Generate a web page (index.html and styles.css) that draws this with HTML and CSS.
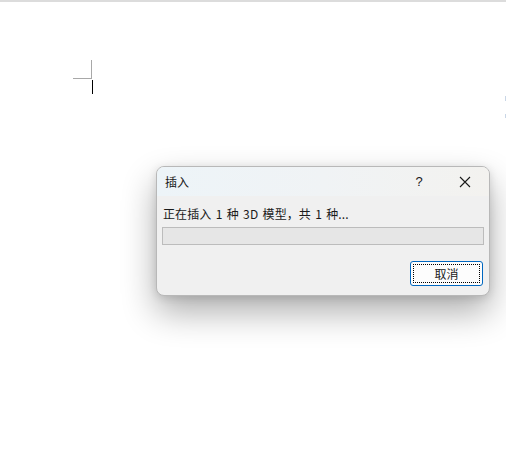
FILE: index.html
```html
<!DOCTYPE html>
<html lang="zh-CN">
<head>
    <meta charset="UTF-8">
    <title>插入</title>
    <link rel="stylesheet" href="styles.css">
</head>
<body>

    <div class="page">
        <div class="corner"></div>
        <div class="caret"></div>
        <div class="ruler-tick t1"></div>
        <div class="ruler-tick t2"></div>
    </div>

    <div class="dialog">
        <div class="titlebar">
            <span class="title">插入</span>
            <span class="help">?</span>
            <span class="close">
                <svg width="12" height="12" viewBox="0 0 12 12"><path d="M1 1L11 11M11 1L1 11" stroke="#1a1a1a" stroke-width="1.1" fill="none"/></svg>
            </span>
        </div>
        <div class="content">
            <div class="status">正在插入 1 种 3D 模型，共 1 种...</div>
            <div class="progress"></div>
            <div class="actions">
                <button class="cancel"><span>取消</span></button>
            </div>
        </div>
    </div>

</body>
</html>
```

FILE: styles.css
```css
body {
    margin: 0;
    background: #fff;
    font-family: "Noto Sans CJK SC", "Microsoft YaHei", sans-serif;
    font-size: 12px;
    color: #1a1a1a;
}
.page {
    height: 451px;
    border-top: 2px solid #dcdcdc;
    box-sizing: border-box;
    position: relative;
    overflow: hidden;
}
.corner {
    position: absolute;
    left: 73px;
    top: 58px;
    width: 18px;
    height: 18px;
    border-right: 1px solid #a8a8a8;
    border-bottom: 1px solid #a8a8a8;
}
.caret {
    position: absolute;
    left: 92px;
    top: 78px;
    width: 1px;
    height: 14px;
    background: #000;
}
.ruler-tick {
    position: absolute;
    left: 505px;
    width: 1px;
    background: #c9d6e6;
}
.t1 { top: 94px; height: 5px; }
.t2 { top: 112px; height: 4px; }
.dialog {
    position: absolute;
    left: 156px;
    top: 166px;
    width: 334px;
    height: 130px;
    box-sizing: border-box;
    border: 1px solid #b8b8b8;
    border-radius: 8px;
    background: #f0f0f0;
    box-shadow: 0 16px 34px rgba(0, 0, 0, 0.32), 0 2px 8px rgba(0, 0, 0, 0.12);
    overflow: hidden;
}
.titlebar {
    height: 29px;
    display: flex;
    align-items: center;
    background: linear-gradient(90deg, #edf4f8 0%, #f0f3f5 50%, #f3f2ef 100%);
}
.title {
    padding-left: 8px;
    flex: 1;
}
.help {
    width: 46px;
    text-align: center;
    font-family: "Liberation Sans", sans-serif;
    font-size: 13px;
}
.close {
    width: 46px;
    display: flex;
    justify-content: center;
    margin-right: 1px;
}
.content {
    padding: 9px 5px 0 5px;
}
.status {
    padding-left: 1px;
    height: 18px;
    line-height: 18px;
    letter-spacing: 0.1px;
    word-spacing: 1.5px;
}
.progress {
    margin-top: 4px;
    height: 18px;
    box-sizing: border-box;
    border: 1px solid #bcbcbc;
    background: #e6e6e6;
}
.actions {
    display: flex;
    justify-content: flex-end;
    margin-top: 16px;
    padding-right: 1px;
}
.cancel {
    width: 73px;
    height: 25px;
    padding: 2px;
    border: 1px solid #0067c0;
    border-radius: 3px;
    background: #fdfdfd;
    font-family: inherit;
    font-size: 12px;
    color: #1a1a1a;
    box-sizing: border-box;
}
.cancel span {
    display: block;
    height: 100%;
    box-sizing: border-box;
    border: 1px dotted #000;
    line-height: 17px;
}
```
